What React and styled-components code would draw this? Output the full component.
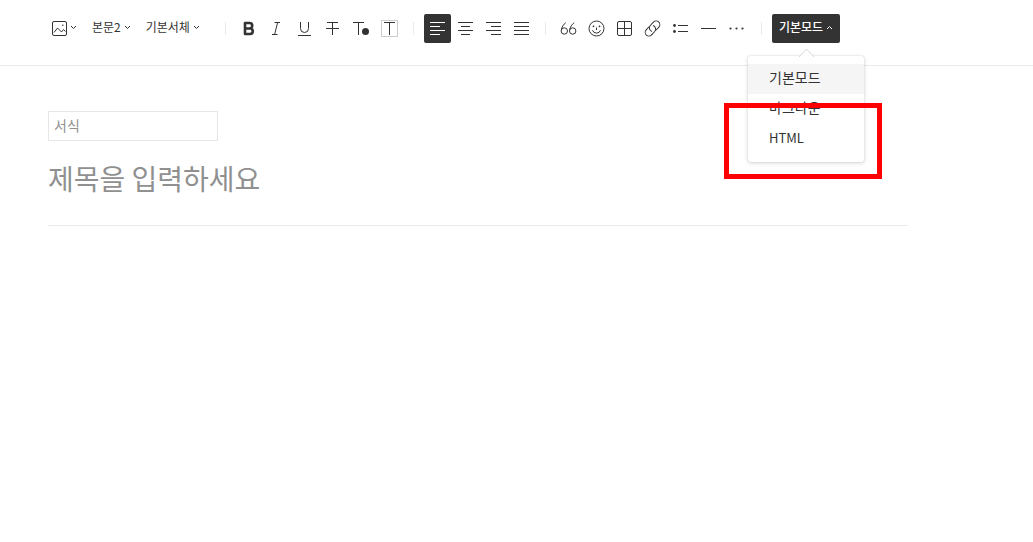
import React from "react";
import styled, { createGlobalStyle, css } from "styled-components";

const GlobalStyle = createGlobalStyle`
  *, *::before, *::after { box-sizing: border-box; }
  body {
    margin: 0;
    background: #fff;
    color: #333;
    font-family: "Noto Sans CJK KR", "Noto Sans", sans-serif;
  }
  button, input { font: inherit; color: inherit; margin: 0; }
`;

const Toolbar = styled.header`
  display: flex;
  align-items: flex-start;
  height: 66px;
  padding: 14px 48px 0;
  border-bottom: 1px solid #ebebeb;
`;

const PlainButton = styled.button`
  display: flex;
  align-items: center;
  height: 29px;
  padding: 0;
  border: 0;
  background: none;
  font-size: 12px;
  line-height: 26px;
  white-space: nowrap;
  cursor: pointer;
`;

const DropButtons = styled.div`
  display: flex;
  gap: 15px;
  width: 167px;
  padding-left: 4px;
`;

const DropButton = styled(PlainButton)`
  gap: 3px;
  padding-bottom: 3px;
`;

const Tools = styled.div`
  display: flex;
  gap: 1px;
`;

const Tool = styled(PlainButton)`
  width: 27px;
  border-radius: 2px;
  ${({ $active }) => $active && css`
    background: #333;
    color: #fff;
  `}
`;

const Divider = styled.span`
  flex: none;
  width: 1px;
  height: 13px;
  margin: ${({ $wide }) => ($wide ? "8px 10px 0 11px" : "8px 9px 0 10px")};
  background: #ebebeb;
`;

const Icon = styled.svg`
  display: block;
  flex: none;
  fill: none;
  stroke: currentColor;
  stroke-width: 1;
`;

const ImageIcon = styled(Icon)`
  margin-top: 4px;
`;

const ModePicker = styled.div`
  position: relative;
`;

const ModeButton = styled(PlainButton)`
  gap: 3px;
  width: 68px;
  padding: 0 0 3px 7px;
  border-radius: 2px;
  background: #333;
  color: #fff;
  font-weight: 500;
`;

const Menu = styled.div`
  position: absolute;
  top: 42px;
  left: -24px;
  width: 116px;
  padding: 8px 0;
  border-radius: 2px;
  background: #fff;
  box-shadow: 0 0 1px rgba(0, 0, 0, 0.3), 0 1px 4px rgba(0, 0, 0, 0.16);
`;

const MenuArrow = styled(Icon)`
  position: absolute;
  top: -8px;
  left: 50px;
`;

const MenuItem = styled.button`
  display: block;
  width: 100%;
  height: 30px;
  padding: ${({ $latin }) => ($latin ? "0 21px 2px" : "0 21px 4px")};
  border: 0;
  background: ${({ $selected }) => ($selected ? "#f5f5f5" : "transparent")};
  font-size: ${({ $latin }) => ($latin ? "13px" : "14px")};
  line-height: 26px;
  text-align: left;
  cursor: pointer;
`;

const Highlight = styled.div`
  position: absolute;
  top: 47px;
  left: -24px;
  width: 158px;
  height: 76px;
  border: 5px solid #f00;
  pointer-events: none;
`;

const Editor = styled.main`
  max-width: 908px;
  padding: 45px 0 0 48px;
`;

const Field = styled.input`
  display: block;
  outline: 0;
  border-radius: 0;
  &::placeholder { color: #909090; opacity: 1; }
`;

const CategoryField = styled(Field)`
  width: 170px;
  height: 30px;
  padding: 0 5px 2px;
  border: 1px solid #e6e6e6;
  font-size: 14px;
`;

const TitleField = styled(Field)`
  width: 100%;
  height: 85px;
  padding: 0 0 10px;
  border: 0;
  border-bottom: 1px solid #ebebeb;
  font-size: 28px;
`;

function Caret({ up }) {
  return (
    <Icon width="7" height="5" viewBox="0 0 7 5" aria-hidden="true">
      <path d={up ? "M1 4l2.5-2.5L6 4" : "M1 1l2.5 2.5L6 1"} />
    </Icon>
  );
}

function ToolButton({ label, active, children }) {
  return (
    <Tool type="button" aria-label={label} $active={active}>
      <Icon width="27" height="29" viewBox="0 0 27 29" aria-hidden="true">{children}</Icon>
    </Tool>
  );
}

export default function App() {
  return (
    <>
      <GlobalStyle />
      <Toolbar>
        <DropButtons>
          <DropButton type="button" aria-label="이미지">
            <ImageIcon width="15" height="16" viewBox="0 0 15 16" aria-hidden="true">
              <rect x="0.5" y="0.5" width="14" height="14" rx="1.5" />
              <path d="M2 11.5l3.5-4.5 4 4 2-2.5 2 2" />
              <circle cx="10.8" cy="4.2" r="0.8" fill="currentColor" stroke="none" />
            </ImageIcon>
            <Caret />
          </DropButton>
          <DropButton type="button">본문2<Caret /></DropButton>
          <DropButton type="button">기본서체<Caret /></DropButton>
        </DropButtons>
        <Divider />
        <Tools>
          <ToolButton label="굵게">
            <path d="M10 9h4.5a2.6 2.6 0 0 1 0 5.5H10zM10 14.5h5a2.7 2.7 0 0 1 0 5.5h-5z" strokeWidth="2.6" strokeLinejoin="round" />
          </ToolButton>
          <ToolButton label="기울임">
            <path d="M11.5 8.5H17M9 20.5h5.5M14.6 8.5l-3 12" />
          </ToolButton>
          <ToolButton label="밑줄">
            <path d="M9.5 8v6.5a4 4 0 0 0 8 0V8M7 21.5h13" />
          </ToolButton>
          <ToolButton label="취소선">
            <path d="M8 8.5h11M13.5 8.5V21M7 14.5h13" />
          </ToolButton>
          <ToolButton label="글자색">
            <path d="M6 8.5h11M11.5 8.5V21" />
            <circle cx="18.5" cy="17.5" r="3.5" fill="currentColor" stroke="none" />
          </ToolButton>
          <ToolButton label="배경색">
            <rect x="6.5" y="6.5" width="16" height="16" stroke="#ccc" />
            <path d="M9 8.5h11M14.5 8.5V21" />
          </ToolButton>
        </Tools>
        <Divider $wide />
        <Tools>
          <ToolButton label="왼쪽 정렬" active>
            <path d="M6 8.5h15M6 12.5h10M6 16.5h15M6 20.5h10" />
          </ToolButton>
          <ToolButton label="가운데 정렬">
            <path d="M6 8.5h15M9 12.5h9M6 16.5h15M9 20.5h9" />
          </ToolButton>
          <ToolButton label="오른쪽 정렬">
            <path d="M6 8.5h15M11 12.5h10M6 16.5h15M11 20.5h10" />
          </ToolButton>
          <ToolButton label="양쪽 정렬">
            <path d="M6 8.5h15M6 12.5h15M6 16.5h15M6 20.5h15" />
          </ToolButton>
        </Tools>
        <Divider />
        <Tools>
          <ToolButton label="인용">
            <circle cx="9.3" cy="17" r="3.2" />
            <circle cx="17.7" cy="17" r="3.2" />
            <path d="M6.3 16C6.8 13 8.3 10.5 10.8 8.7M14.7 16c.5-3 2-5.5 4.5-7.3" />
          </ToolButton>
          <ToolButton label="이모티콘">
            <circle cx="13.5" cy="14.5" r="7.5" />
            <path d="M9.5 16.2a4.2 4.2 0 0 0 8 0M13.5 13.5v2.5" />
            <circle cx="10.5" cy="12.3" r="0.9" fill="currentColor" stroke="none" />
            <circle cx="16.5" cy="12.3" r="0.9" fill="currentColor" stroke="none" />
          </ToolButton>
          <ToolButton label="표">
            <rect x="6.5" y="7.5" width="14" height="14" rx="1.5" />
            <path d="M13.5 7.5v14M6.5 14.5h14" />
          </ToolButton>
          <ToolButton label="링크">
            <path d="M14.6 18.2h4.2a3.7 3.7 0 0 0 0-7.4h-4.6a3.7 3.7 0 0 0-3.2 5.4" transform="rotate(-47 13.5 14.5)" />
            <path d="M14.6 18.2h4.2a3.7 3.7 0 0 0 0-7.4h-4.6a3.7 3.7 0 0 0-3.2 5.4" transform="rotate(133 13.5 14.5)" />
          </ToolButton>
          <ToolButton label="목록">
            <path d="M11 11.5h10M11 17.5h10" />
            <circle cx="7.5" cy="11.5" r="1.4" fill="currentColor" stroke="none" />
            <circle cx="7.5" cy="17.5" r="1.4" fill="currentColor" stroke="none" />
          </ToolButton>
          <ToolButton label="구분선">
            <path d="M6 14.5h15" />
          </ToolButton>
          <ToolButton label="더보기">
            <g fill="currentColor" stroke="none">
              <circle cx="7.5" cy="14.5" r="1.1" />
              <circle cx="13.5" cy="14.5" r="1.1" />
              <circle cx="19.5" cy="14.5" r="1.1" />
            </g>
          </ToolButton>
        </Tools>
        <Divider $wide />
        <ModePicker>
          <ModeButton type="button" aria-expanded="true">기본모드<Caret up /></ModeButton>
          <Menu>
            <MenuArrow width="17" height="9" viewBox="0 0 17 9" aria-hidden="true">
              <path d="M1 9l7.5-8L16 9" fill="#fff" stroke="#d8d8d8" />
            </MenuArrow>
            <MenuItem type="button" $selected>기본모드</MenuItem>
            <MenuItem type="button">마크다운</MenuItem>
            <MenuItem type="button" $latin>HTML</MenuItem>
            <Highlight />
          </Menu>
        </ModePicker>
      </Toolbar>
      <Editor>
        <CategoryField aria-label="서식" placeholder="서식" />
        <TitleField aria-label="제목" placeholder="제목을 입력하세요" />
      </Editor>
    </>
  );
}
